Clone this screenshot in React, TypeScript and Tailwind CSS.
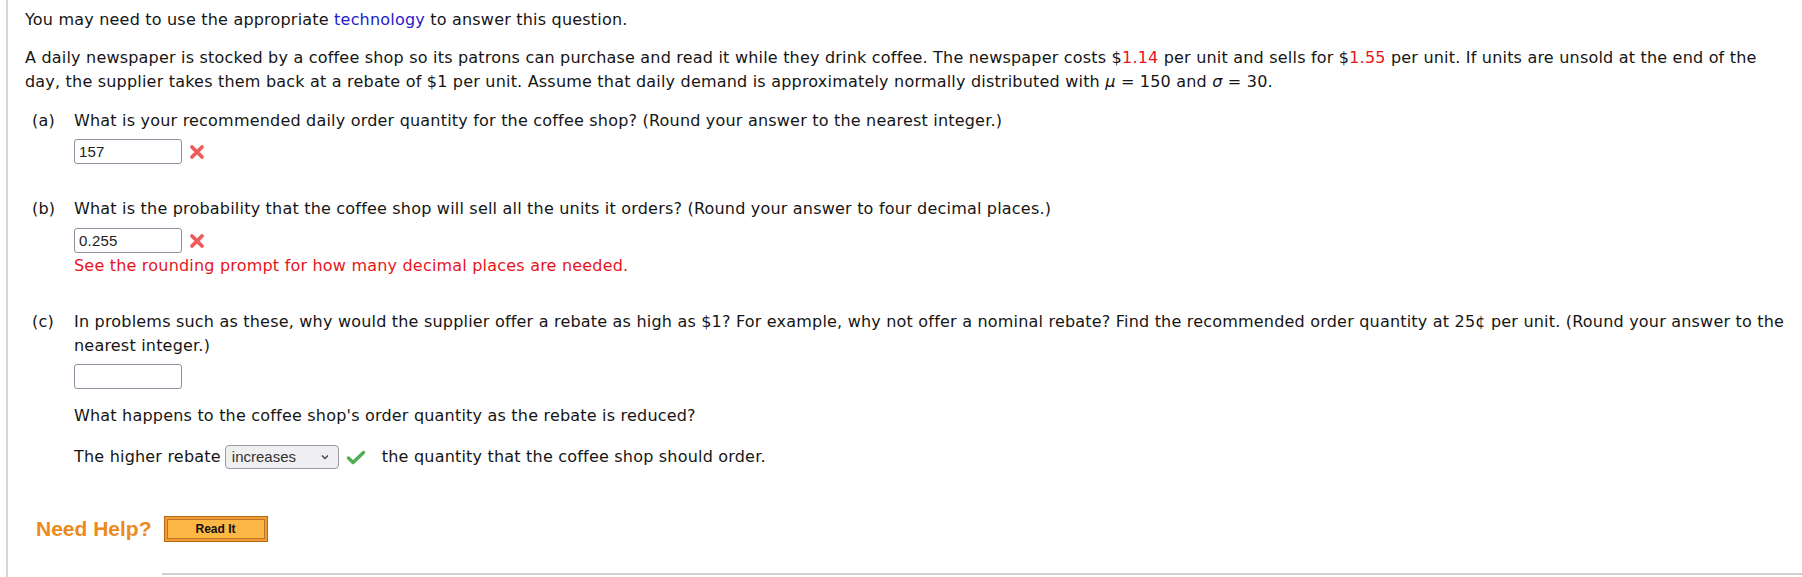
import React from 'react';

const body = { fontFamily: '"DejaVu Sans", Verdana, sans-serif' };
const arial = { fontFamily: '"Liberation Sans", Arial, sans-serif' };

function WrongMark() {
    return (
        <svg width="16" height="16" viewBox="0 0 16 16" className="ml-[7px] shrink-0">
            <path d="M3 3 L13 13 M13 3 L3 13" stroke="#f05a5a" strokeWidth="3.8" strokeLinecap="round" />
        </svg>
    );
}

function RightMark() {
    return (
        <svg width="20" height="16" viewBox="0 0 20 16" className="ml-[7px] shrink-0">
            <path d="M2.5 9 L7 13.5 L17.5 3.5" stroke="#4fae4f" strokeWidth="3.4" fill="none" strokeLinecap="round" strokeLinejoin="round" />
        </svg>
    );
}

function AnswerBox({ value }: { value?: string }) {
    return (
        <div
            className="w-[108px] h-[25px] border border-[#8f8f9d] rounded-[3px] bg-white px-[4px] flex items-center text-[15px] text-[#222]"
            style={arial}
        >
            {value}
        </div>
    );
}

function Part({ label, children }: { label: string; children: React.ReactNode }) {
    return (
        <div className="flex">
            <div className="w-[49px] pl-[7px] shrink-0">{label}</div>
            <div className="flex-1">{children}</div>
        </div>
    );
}

export default function App() {
    return (
        <div className="w-[1802px] h-[577px] bg-white relative overflow-hidden">
            <div
                className="ml-[6px] h-full border-l-2 border-[#d6d6d6] pl-[17px] pt-[8px] text-[16px] tracking-[0.2px] leading-[24px] text-[#151515]"
                style={body}
            >
                <p>
                    You may need to use the appropriate <span className="text-[#2222cc]">technology</span> to answer this question.
                </p>

                <p className="mt-[14px] whitespace-nowrap">
                    A daily newspaper is stocked by a coffee shop so its patrons can purchase and read it while they drink coffee. The newspaper costs $
                    <span className="text-[#e8141c]">1.14</span> per unit and sells for $<span className="text-[#e8141c]">1.55</span> per unit. If units are unsold at the end of the
                    <br />
                    day, the supplier takes them back at a rebate of $1 per unit. Assume that daily demand is approximately normally distributed with{' '}
                    <i>μ</i> = 150 and <i>σ</i> = 30.
                </p>

                <div className="mt-[15px]">
                    <Part label="(a)">
                        <div>What is your recommended daily order quantity for the coffee shop? (Round your answer to the nearest integer.)</div>
                        <div className="mt-[6px] flex items-center">
                            <AnswerBox value="157" />
                            <WrongMark />
                        </div>
                    </Part>
                </div>

                <div className="mt-[33px]">
                    <Part label="(b)">
                        <div>What is the probability that the coffee shop will sell all the units it orders? (Round your answer to four decimal places.)</div>
                        <div className="mt-[7px] flex items-center">
                            <AnswerBox value="0.255" />
                            <WrongMark />
                        </div>
                        <div className="mt-[1px] text-[#e8141c]">See the rounding prompt for how many decimal places are needed.</div>
                    </Part>
                </div>

                <div className="mt-[32px]">
                    <Part label="(c)">
                        <div className="whitespace-nowrap">
                            In problems such as these, why would the supplier offer a rebate as high as $1? For example, why not offer a nominal rebate? Find the recommended order quantity at 25¢ per unit. (Round your answer to the
                            <br />
                            nearest integer.)
                        </div>
                        <div className="mt-[6px]">
                            <AnswerBox />
                        </div>
                        <div className="mt-[15px]">What happens to the coffee shop's order quantity as the rebate is reduced?</div>
                        <div className="mt-[17px] flex items-center">
                            <span>The higher rebate</span>
                            <div
                                className="ml-[4px] w-[114px] h-[24px] border border-[#9a9aa4] rounded-[4px] bg-[#efeff2] flex items-center justify-between pl-[6px] pr-[8px] text-[15px] tracking-normal text-[#333]"
                                style={arial}
                            >
                                <span>increases</span>
                                <svg width="10" height="10" viewBox="0 0 10 10">
                                    <path d="M2 3.5 L5 6.5 L8 3.5" stroke="#444" strokeWidth="1.4" fill="none" />
                                </svg>
                            </div>
                            <RightMark />
                            <span className="ml-[16px]">the quantity that the coffee shop should order.</span>
                        </div>
                    </Part>
                </div>

                <div className="mt-[47px] flex items-center tracking-normal" style={arial}>
                    <span className="ml-[11px] text-[21px] font-bold text-[#ec8a1c]">Need Help?</span>
                    <div className="ml-[12px] w-[104px] h-[26px] border border-[#b5681c] bg-[#f29b30] p-[2px]">
                        <div className="h-full border border-[#b8742e] bg-[#fdb745] flex items-center justify-center text-[12px] font-bold text-[#111]">
                            Read It
                        </div>
                    </div>
                </div>
            </div>
            <div className="absolute left-[162px] right-0 top-[573px] h-[2px] bg-[#cfcfcf]" />
        </div>
    );
}
